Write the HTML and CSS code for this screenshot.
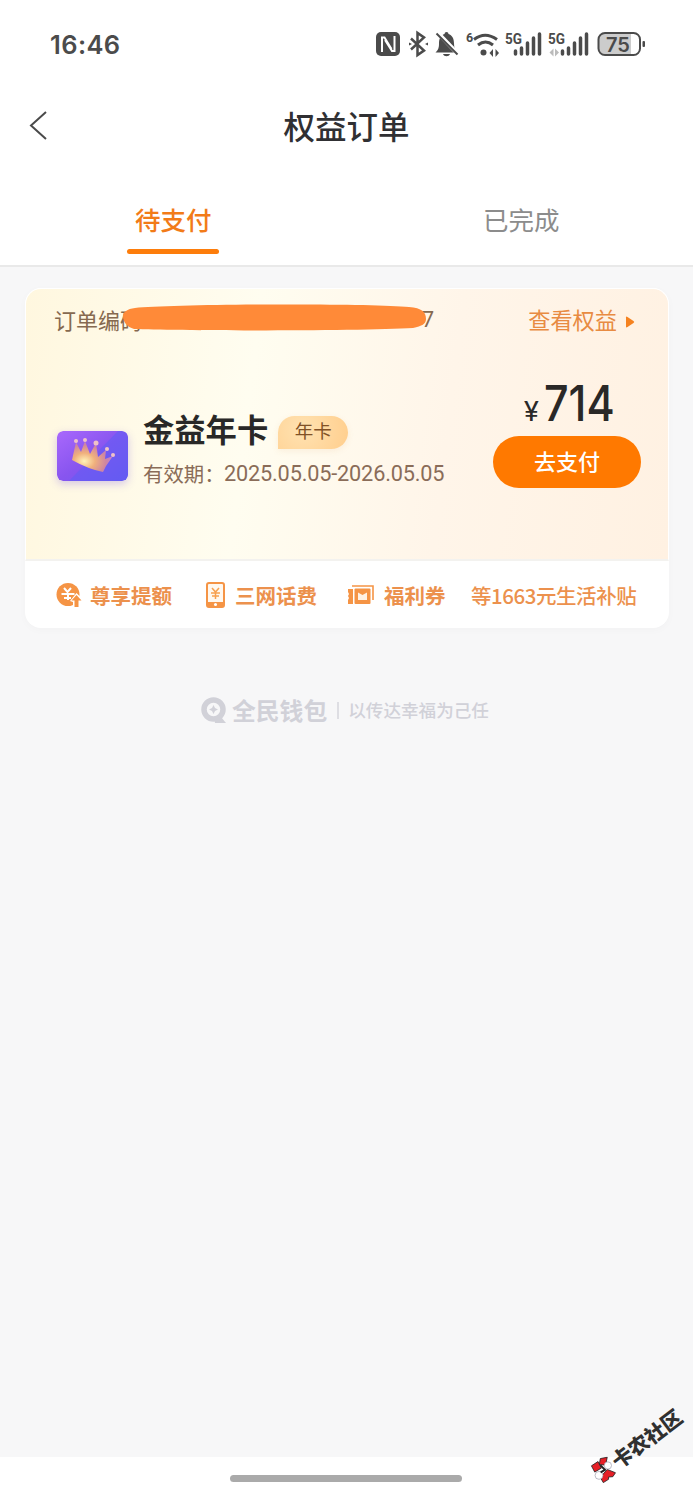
FILE: index.html
```
<!DOCTYPE html>
<html lang="zh-CN">
<head>
<meta charset="utf-8">
<title>权益订单</title>
<link rel="stylesheet" href="styles.css">
</head>
<body>
<header class="top">
  <div class="status">
    <span class="clock">16:46</span>
    <svg class="status-icons" width="290" height="50" viewBox="365 20 290 50" fill="#4b4b4b">
      <rect x="376" y="32" width="24" height="24" rx="5"/>
      <path d="M382 52V37.500h2.500L391.500 49M394.500 36v15H392L385 40" fill="none" stroke="#fff" stroke-width="2"/>
      <path d="M411 38.500l13 12-6.500 4.500V33l6.500 4.500-13 12" fill="none" stroke="#4b4b4b" stroke-width="2.500"/>
      <path d="M409 42.500l3 1.500-3 1.500zM428 42.500l-3 1.500 3 1.500z"/>
      <path d="M435.500 52.500c3-3 3.500-5 3.500-9 0-5 2-8.500 5.500-9.500a2 2 0 0 1 4 0c3.500 1 5.500 4.500 5.500 9.500 0 4 1 6 3 9zM443 54h7c-1 3-6 3-7 0z"/>
      <path d="M437 32l21 22" stroke="#fff" stroke-width="4"/>
      <path d="M436.500 33.500l21 21" stroke="#4b4b4b" stroke-width="2"/>
      <text x="466" y="41.500" class="mini-six">6</text>
      <path d="M474 39.500q11-8.500 23 0M478 45q7.500-6 15 0" fill="none" stroke="#4b4b4b" stroke-width="3"/>
      <circle cx="483.500" cy="52.500" r="3"/>
      <path d="M489.500 53l3.500-4v8zM499 53l-3.500-4v8z"/>
      <text x="505" y="43.500" class="mini" textLength="17" lengthAdjust="spacingAndGlyphs">5G</text>
      <path d="M515.500 54v-3M521.500 54v-6M527.500 54v-11M533.500 54v-16M539.500 54V34" stroke="#4b4b4b" stroke-width="3.500" stroke-linecap="round"/>
      <text x="548" y="43.500" class="mini" textLength="17" lengthAdjust="spacingAndGlyphs">5G</text>
      <path d="M549.500 52.500l4-4v8zM559 52.500l-4-4v8z" fill="#bbb"/>
      <path d="M562.500 54v-3M568.500 54v-6M574.500 54v-11M580.500 54v-16M586.500 54V34" stroke="#4b4b4b" stroke-width="3.500" stroke-linecap="round"/>
      <path d="M605 33h26v22h-26a6 6 0 0 1-6-6V39a6 6 0 0 1 6-6z" fill="#ccc"/>
      <rect x="598.500" y="33" width="41.500" height="22" rx="6.500" fill="none" stroke="#4b4b4b" stroke-width="2"/>
      <rect x="642.500" y="41" width="2.500" height="6" rx="1"/>
      <text x="606" y="51.500" class="battery" textLength="24" lengthAdjust="spacingAndGlyphs">75</text>
    </svg>
  </div>
  <div class="titlebar">
    <svg class="back" width="20" height="30" viewBox="0 0 20 30"><path d="M17 2L2 15.500 17 29" fill="none" stroke="#4a4a4a" stroke-width="2"/></svg>
    <h1 class="title">权益订单</h1>
  </div>
  <nav class="tabs">
    <a class="tab tab-on">待支付</a>
    <a class="tab tab-off">已完成</a>
  </nav>
</header>
<main class="content">
  <section class="card">
    <div class="order">
      <div class="order-head">
        <div class="code"><span>订单编码</span><span class="code-end">7</span>
          <svg class="mask" width="304" height="28" viewBox="0 0 304 28"><path d="M12 4C50 0 245-1 286 3c13 1 17 5 17 12 0 5-4 7-13 9-50 3-235 3-279 1C4 23 0 18 0 12c0-4 4-7 12-8z" fill="#ff8a38"/></svg>
        </div>
        <a class="view">查看权益<svg width="10" height="12" viewBox="0 0 10 12"><path d="M1 1.500Q1 0 2.500 1l6 4q1.500 1 0 2l-6 4Q1 12 1 10.500z" fill="#f58220"/></svg></a>
      </div>
      <div class="order-body">
        <svg class="crown" width="71" height="50" viewBox="0 0 71 50">
          <defs>
            <linearGradient id="purple" x1="0" y1="0" x2="1" y2="1"><stop offset="0" stop-color="#a968fc"/><stop offset=".5" stop-color="#8855ef"/><stop offset="1" stop-color="#6a58ef"/></linearGradient>
            <radialGradient id="gold" cx=".3" cy=".65" r=".75"><stop offset="0" stop-color="#fff3b9"/><stop offset=".35" stop-color="#f0b07c"/><stop offset=".7" stop-color="#cf86a0"/><stop offset="1" stop-color="#b779ed"/></radialGradient>
          </defs>
          <rect width="71" height="50" rx="6" fill="url(#purple)"/>
          <path d="M61 0h4a6 6 0 0 1 6 6v38a6 6 0 0 1-6 6H12z" fill="#5c5df6" opacity=".5"/>
          <path d="M19 11l5 10 4-11 5 13 6-11 2 14 8-7-1 9 8-3-7 10-3 6Q31 38 15 29z" fill="url(#gold)"/>
          <g fill="#efc2c7"><circle cx="19" cy="10" r="2"/><circle cx="28" cy="9" r="2"/><circle cx="39" cy="12" r="2.500"/><circle cx="50" cy="18" r="2"/><circle cx="56" cy="24" r="2"/></g>
        </svg>
        <div class="info">
          <div class="name-row"><h2 class="name">金益年卡</h2><span class="badge">年卡</span></div>
          <p class="valid"><span class="valid-label">有效期：</span><span class="dates">2025.05.05-2026.05.05</span></p>
        </div>
        <div class="pay">
          <div class="price"><span class="yen">¥</span><span class="amount">714</span></div>
          <button class="pay-btn">去支付</button>
        </div>
      </div>
    </div>
    <div class="perks">
      <span class="perk perk-a">
        <svg width="26" height="26" viewBox="0 0 26 26"><circle cx="12" cy="12.500" r="11.500" fill="#f59445"/><path d="M8 6l3.500 4L15 6M5.500 12h13M12 11v7M8 16h7" fill="none" stroke="#fff" stroke-width="2"/><path d="M14 19l6.500-8 7 7v9H17v-7z" fill="#fff"/><path d="M20.500 13l5 5.500h-3V25h-4v-6.500h-3z" fill="#f59445"/></svg>
        尊享提额</span>
      <span class="perk perk-b">
        <svg width="19" height="26" viewBox="0 0 19 26"><rect x="1" y="1" width="17" height="24" rx="2" fill="#fff8ef" stroke="#f59445" stroke-width="2"/><path d="M1 20h17v5H1z" fill="#f59445"/><circle cx="9.500" cy="22.500" r="1.500" fill="#fff"/><path d="M6 6l3.500 4L13 6M5 11h9M6 14h7M9.500 10v7" fill="none" stroke="#f7a04f" stroke-width="1.500"/></svg>
        三网话费</span>
      <span class="perk perk-c">
        <svg width="27" height="20" viewBox="0 0 27 20"><path d="M0 4h5v15H0v-4l1-2-1-2 1-2-1-2z" fill="#f59445"/><path d="M4 1h21v14" fill="none" stroke="#f59445" stroke-width="1.600"/><rect x="6.500" y="3.500" width="16" height="15.500" rx="1" fill="#f59445"/><path d="M10 7.500l4.500 2.500L19 7.500V15h-9z" fill="#fff1e3"/></svg>
        福利券</span>
      <span class="perk-extra">等1663元生活补贴</span>
    </div>
  </section>
  <footer class="brand">
    <svg width="26" height="27" viewBox="0 0 26 27"><circle cx="12.500" cy="12.500" r="9.500" fill="none" stroke="#d1d1d8" stroke-width="5.500"/><path d="M13 20h7l5 6H14z" fill="#d1d1d8"/><path d="M12.500 8l1.500 3 3 1.500-3 1.500-1.500 3-1.500-3-3-1.500 3-1.500z" fill="#d1d1d8"/></svg>
    <strong class="brand-name">全民钱包</strong><i class="rule"></i><span class="slogan">以传达幸福为己任</span>
  </footer>
</main>
<div class="homebar"><i class="handle"></i></div>
<div class="watermark">
  <svg class="stamp" width="27" height="27" viewBox="65 178 80 82"><g fill="#e51f26" stroke="#222" stroke-width="2.500"><path d="M70 207l20-13 10 20-20 12z"/><path d="M97 185l21-4-5 24-19-2z"/><path d="M103 235l15-17 25 10-8 12-13 1v7l-16 10-8-14z"/></g><g fill="#fff" stroke="#99a" stroke-width="2"><circle cx="120" cy="206" r="11"/><circle cx="93" cy="236" r="12"/></g><path d="M97 205l14 14-13 8" fill="none" stroke="#222" stroke-width="6"/></svg>
  <span class="stamp-text">卡农社区</span>
</div>
</body>
</html>
```

FILE: styles.css
```
* { box-sizing: border-box; }
body {
  margin: 0;
  height: 1500px;
  display: flex;
  flex-direction: column;
  background: #fff;
  overflow: hidden;
  font-family: "Noto Sans CJK SC", sans-serif;
}
h1, h2, p { margin: 0; }
.top { flex: none; height: 267px; border-bottom: 2px solid #e9e9e9; background: #fff; }
.status { height: 90px; padding: 20px 38px 20px 50px; display: flex; justify-content: space-between; }
.clock { font: 600 25.500px/50px Inter, sans-serif; letter-spacing: .4px; color: #4b4b4b; }
.status-icons { flex: none; }
.mini { font: 700 14.500px Roboto, sans-serif; }
.mini-six { font: 700 12.500px Roboto, sans-serif; }
.battery { font: 600 20px Inter, sans-serif; }
.titlebar { height: 75px; display: grid; grid-template-columns: 60px 1fr 60px; align-items: center; }
.back { margin-left: 29px; margin-top: -5px; }
.title { font-size: 31.500px; line-height: 44px; font-weight: 500; color: #303033; text-align: center; margin-top: -6px; }
.tabs { height: 100px; display: grid; grid-template-columns: 1fr 1fr; justify-items: center; }
.tab { position: relative; width: 92px; height: 90px; padding-top: 35px; font-size: 25.500px; line-height: 38px; text-align: center; color: #8c8c8c; }
.tab-on { color: #f27b18; font-weight: 500; }
.tab-off { margin-left: 3px; }
.tab-on::after { content: ""; position: absolute; left: 0; bottom: 1px; width: 92px; height: 5px; border-radius: 3px; background: #fd7d0b; }
.content { flex: 1; padding: 21px 24px 0 25px; background: #f7f7f8; }
.card { height: 340px; border-radius: 16px; overflow: hidden; background: #fff; box-shadow: 0 2px 8px rgba(0,0,0,.025); }
.order {
  height: 273px;
  border: 1px solid #fff;
  border-bottom: 2px solid #f3f2ef;
  border-radius: 16px 16px 0 0;
  background: linear-gradient(97deg, #fff7df 0%, #fffdf0 35%, #fff5e9 65%, #fff1e2 100%);
}
.order-head { height: 60px; padding: 0 33px 0 28px; display: flex; justify-content: space-between; align-items: center; }
.code { position: relative; width: 380px; display: flex; justify-content: space-between; font-size: 22px; line-height: 32px; color: #86694f; }
.code-end { font-family: Roboto, sans-serif; padding-top: 1px; }
.mask { position: absolute; left: 69px; top: 1px; }
.view { display: flex; align-items: center; gap: 8px; font-size: 22.200px; line-height: 32px; color: #e88b42; }
.view svg { margin-top: 5px; }
.order-body { display: flex; padding: 31px 27px 0 31px; }
.crown { flex: none; margin-top: 51px; border-radius: 6px; box-shadow: 0 3px 8px rgba(115,85,230,.3); }
.info { flex: 1; padding: 28px 0 0 15px; }
.name-row { display: flex; gap: 10px; height: 44px; }
.name { font-size: 31.300px; line-height: 42px; font-weight: 700; color: #292827; }
.badge { width: 70px; height: 33px; margin-top: 8px; border-radius: 17px 17px 17px 0; text-align: center; font-size: 18.500px; line-height: 28px; color: #815126; background: radial-gradient(circle at 35% 40%, #ffe2b1, #ffce8d); box-shadow: 0 2px 6px rgba(210,150,80,.12); }
.valid { display: flex; line-height: 30px; margin-top: 6px; color: #8a6c58; white-space: nowrap; }
.valid-label { width: 81px; font-size: 20.400px; }
.dates { font-family: Roboto, sans-serif; font-size: 21.700px; letter-spacing: -.170px; padding-top: 1px; }
.pay { flex: none; width: 148px; display: flex; flex-direction: column; align-items: center; }
.price { display: flex; align-items: baseline; width: 86px; height: 56px; margin-top: -7px; color: #2a2827; line-height: 60px; }
.yen { flex: none; width: 20px; font-family: Roboto, sans-serif; font-size: 28px; }
.amount { font-family: Inter, sans-serif; font-size: 49.500px; font-weight: 500; transform: scaleX(.87); transform-origin: left; }
.pay-btn { width: 148px; height: 52px; margin-top: 7px; padding: 0 0 4px; border: 0; border-radius: 26px; background: #ff7900; color: #fff; font: 500 22px/48px "Noto Sans CJK SC", sans-serif; }
.perks { height: 67px; padding: 0 30px 0 31px; display: flex; align-items: center; color: #ec914d; font-size: 20.500px; line-height: 30px; white-space: nowrap; }
.perk { display: flex; align-items: center; font-weight: 700; }
.perk-a { gap: 8px; width: 150px; }
.perk-b { gap: 10px; width: 142px; }
.perk-c { gap: 9px; width: 123px; }
.perk-extra { font-weight: 500; letter-spacing: -.450px; }
.brand { margin: 66px 0 0 176px; display: flex; align-items: center; height: 32px; color: #d1d1d8; white-space: nowrap; }
.brand-name { margin-left: 5px; font-size: 23.800px; line-height: 30px; font-weight: 700; }
.rule { width: 2px; height: 17px; margin: 0 9px 0 10px; background: #dedee3; }
.slogan { font-size: 17.600px; font-weight: 500; line-height: 30px; }
.homebar { flex: none; height: 43px; padding-top: 18px; background: #fff; }
.handle { display: block; width: 232px; height: 7px; margin-left: 230px; border-radius: 4px; background: #aaa; }
.watermark { position: absolute; left: 581px; top: 1430px; display: flex; align-items: center; gap: 1px; transform: rotate(-37deg); color: #303030; font-size: 20.500px; line-height: 28px; font-weight: 900; white-space: nowrap; }
.stamp { transform: rotate(37deg); }
.stamp-text { margin: 2px 0 0 -2px; }
```
